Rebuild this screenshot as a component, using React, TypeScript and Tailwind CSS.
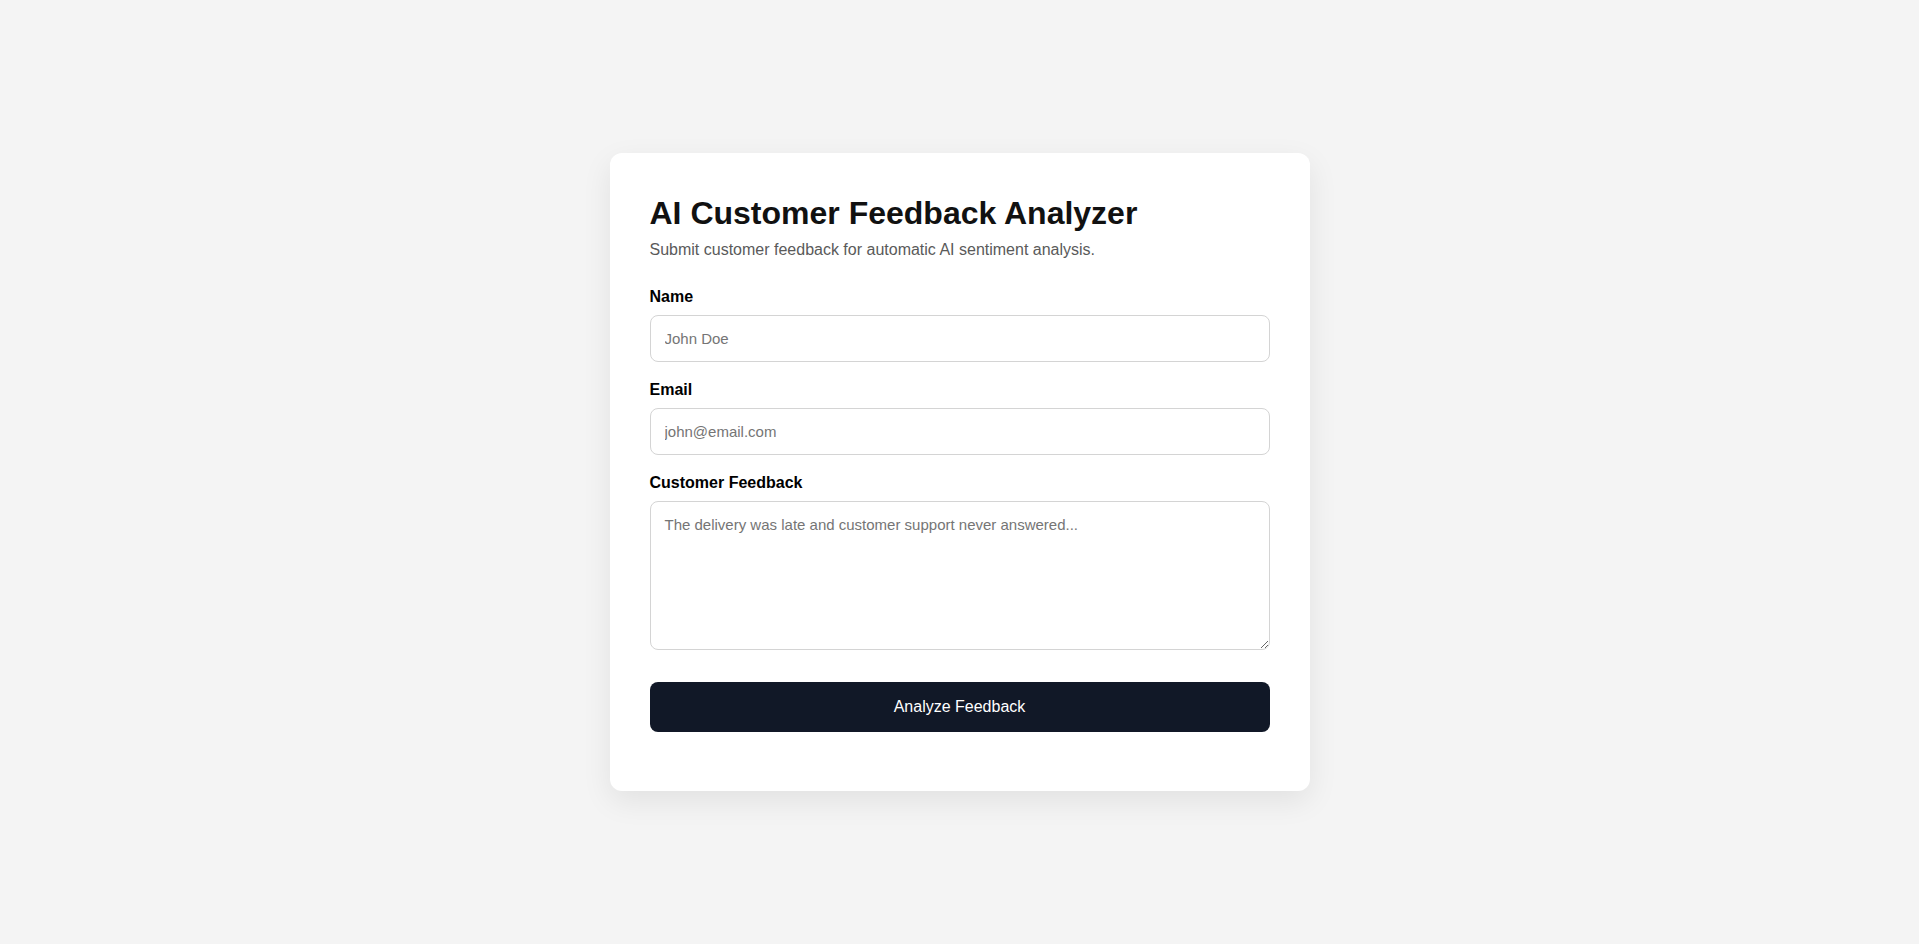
export default function App() {
  return (
    <div
      className="min-h-screen w-full bg-[#f4f4f4] flex items-center justify-center"
      style={{ fontFamily: '"Liberation Sans", Arial, sans-serif' }}
    >
      <div className="w-[700px] bg-white rounded-[12px] shadow-[0_10px_30px_rgba(0,0,0,0.08)] px-[40px] pt-[41px] pb-[59px]">
        <h1 className="text-[32px] font-bold leading-[38px] text-[#111]">AI Customer Feedback Analyzer</h1>
        <p className="mt-[8px] text-[16px] leading-[20px] text-[#5a5a5a]">
          Submit customer feedback for automatic AI sentiment analysis.
        </p>
        <form className="mt-[28px]" onSubmit={(e) => e.preventDefault()}>
          <label className="block text-[16px] font-bold leading-[18px] text-black mb-[9px]">Name</label>
          <input
            type="text"
            placeholder="John Doe"
            className="block w-full h-[47px] border border-[#d4d4d4] rounded-[8px] px-[14px] text-[15px] placeholder:text-[#757575] outline-none"
          />
          <label className="block text-[16px] font-bold leading-[18px] text-black mt-[19px] mb-[9px]">Email</label>
          <input
            type="email"
            placeholder="john@email.com"
            className="block w-full h-[47px] border border-[#d4d4d4] rounded-[8px] px-[14px] text-[15px] placeholder:text-[#757575] outline-none"
          />
          <label className="block text-[16px] font-bold leading-[18px] text-black mt-[19px] mb-[9px]">Customer Feedback</label>
          <textarea
            placeholder="The delivery was late and customer support never answered..."
            className="block w-full h-[149px] border border-[#d4d4d4] rounded-[8px] px-[14px] py-[12px] text-[15px] placeholder:text-[#757575] outline-none resize-y"
          />
          <button
            type="submit"
            className="mt-[32px] w-full h-[50px] rounded-[8px] bg-[#111827] text-white text-[16px]"
          >
            Analyze Feedback
          </button>
        </form>
      </div>
    </div>
  );
}
